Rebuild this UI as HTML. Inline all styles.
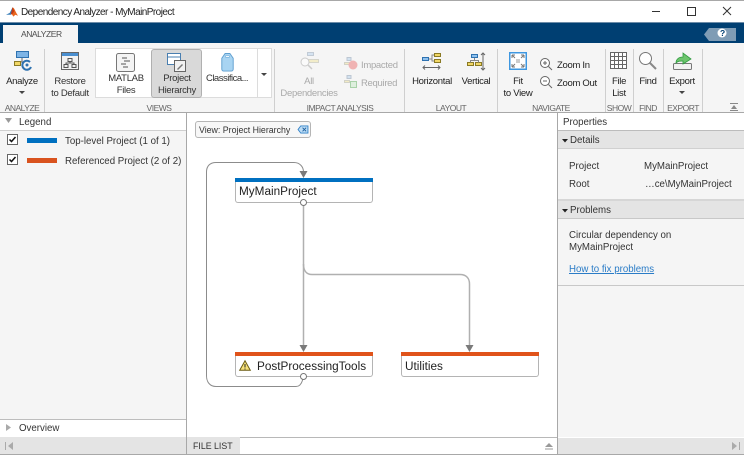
<!DOCTYPE html>
<html><head><meta charset="utf-8">
<style>
html,body{margin:0;padding:0;width:744px;height:455px;overflow:hidden;background:#fff;font-family:"Liberation Sans",sans-serif;color:#222}
.a{position:absolute}
.t{position:absolute;white-space:nowrap;font-size:9.7px;line-height:12px}
.rb .t{font-size:9.5px;letter-spacing:-.3px}
.c{text-align:center;transform:translateX(-50%)}
.rb .g{color:#666;font-size:8.5px;letter-spacing:-.5px}
.d{color:#a9a9a9}
.sep{position:absolute;top:49px;height:63px;width:1px;background:#cfcfcf}
svg{position:absolute;overflow:visible}
</style></head><body>
<div class="a" style="left:0;top:0;width:744px;height:455px;overflow:hidden">

<!-- title bar -->
<div class="a" style="left:0;top:0;width:744px;height:1px;background:#a8a8a8"></div>
<svg style="left:6px;top:6px" width="13" height="12" viewBox="0 0 14 12"><path d="M0 9l4-2 3-6 2 3-4 5z" fill="#3a7fb8"/><path d="M7 1c2 0 3 5 6 9l-3-1-2 2-2-3z" fill="#e8641e"/><path d="M7 1l2 4-2 3-2 1z" fill="#c23a12"/></svg>
<div class="t" style="left:21px;top:6px;font-size:10px;letter-spacing:-.55px;line-height:14px;color:#222">Dependency Analyzer - MyMainProject</div>
<div class="a" style="left:652px;top:11px;width:8px;height:1px;background:#333"></div>
<div class="a" style="left:687px;top:7px;width:7px;height:7px;border:1px solid #333"></div>
<svg style="left:722px;top:6px" width="10" height="10" viewBox="0 0 10 10"><path d="M1 1l8 8M9 1l-8 8" stroke="#333" stroke-width="1" fill="none"/></svg>

<!-- blue band -->
<div class="a" style="left:0;top:22px;width:744px;height:21px;background:#003f72;border-top:1px solid #6d8ca8;box-sizing:border-box"></div>
<div class="a" style="left:3px;top:25px;width:75px;height:19px;background:#f5f5f5"></div>
<div class="t" style="left:21px;top:28px;font-size:8.5px;letter-spacing:-.45px;line-height:12px;color:#4d4d4d">ANALYZER</div>
<svg style="left:704px;top:28px" width="32" height="13" viewBox="0 0 32 13"><path d="M5 0H32V13H5L0 6.500z" fill="#7f9cb5"/><circle cx="18" cy="5" r="4.500" fill="#fff"/></svg>
<div class="t" style="left:720px;top:27px;font-size:8.5px;font-weight:bold;color:#003f72">?</div>

<!-- ribbon -->
<div class="a" style="left:0;top:43px;width:744px;height:69px;background:#f5f5f5"></div>
<div class="a" style="left:0;top:112px;width:744px;height:1px;background:#a8a8a8"></div>
<div class="sep" style="left:44px"></div>
<div class="sep" style="left:274px"></div>
<div class="sep" style="left:404px"></div>
<div class="sep" style="left:497px"></div>
<div class="sep" style="left:605px"></div>
<div class="sep" style="left:633px"></div>
<div class="sep" style="left:663px"></div>
<div class="sep" style="left:702px"></div>

<div class="rb">
<!-- analyze -->
<svg style="left:14px;top:51px" width="20" height="20" viewBox="0 0 20 20"><rect x="2.500" y=".5" width="12" height="6" fill="#7db4e6" stroke="#2f72b0"/><path d="M8 7v4H5" stroke="#666" fill="none"/><rect x=".5" y="10.500" width="6" height="4" fill="#f1d766" stroke="#8a7a25"/><path d="M16 11a4.500 4.500 0 1 0 1 5" stroke="#2f72b0" stroke-width="2" fill="none"/><circle cx="13" cy="14" r="1.500" fill="#2f72b0"/></svg>
<div class="t c" style="left:22px;top:76px">Analyze</div>
<svg style="left:19px;top:91px" width="7" height="4"><path d="M0 0h6l-3 3z" fill="#444"/></svg>
<div class="t c g" style="left:22px;top:102px">ANALYZE</div>

<!-- restore -->
<svg style="left:61px;top:52px" width="18" height="18" viewBox="0 0 18 18"><rect x=".5" y=".5" width="17" height="17" fill="#f2f2f2" stroke="#666"/><rect x="1" y="1" width="16" height="3" fill="#4a8fd0"/><rect x="7" y="6.500" width="4" height="3" fill="none" stroke="#555"/><rect x="3" y="12.500" width="4" height="3" fill="none" stroke="#555"/><rect x="11" y="12.500" width="4" height="3" fill="none" stroke="#555"/><path d="M9 9.500v1.500H5v1.500M9 11h4v1.500" fill="none" stroke="#555"/></svg>
<div class="t c" style="left:70px;top:76px;color:#333">Restore</div>
<div class="t c" style="left:70px;top:88px;color:#333">to Default</div>

<!-- views gallery -->
<div class="a" style="left:95px;top:48px;width:177px;height:50px;background:#fff;border:1px solid #dcdcdc;box-sizing:border-box"></div>
<div class="a" style="left:257px;top:48px;width:1px;height:50px;background:#dcdcdc"></div>
<div class="a" style="left:151px;top:49px;width:51px;height:49px;background:#d9d9d9;border:1px solid #b0b0b0;border-radius:3px;box-sizing:border-box"></div>
<svg style="left:116px;top:53px" width="19" height="19" viewBox="0 0 19 19"><rect x=".5" y=".5" width="18" height="18" rx="2" fill="#f4f4f4" stroke="#777"/><path d="M6 5h5M8 8h6M5 11h5M7 14h5" stroke="#555" fill="none"/></svg>
<div class="t c" style="left:126px;top:73px;color:#333">MATLAB</div>
<div class="t c" style="left:126px;top:85px;color:#333">Files</div>
<svg style="left:167px;top:53px" width="20" height="19" viewBox="0 0 20 19"><rect x=".5" y=".5" width="13" height="11" fill="#fff" stroke="#4a7fb0"/><path d="M1 4h12" stroke="#4a7fb0"/><rect x="7.500" y="7.500" width="11" height="11" fill="#f2f2f2" stroke="#666"/><path d="M10 16l5-5 1 1-5 5z" fill="#777"/></svg>
<div class="t c" style="left:177px;top:73px;color:#333">Project</div>
<div class="t c" style="left:177px;top:85px;color:#333">Hierarchy</div>
<svg style="left:221px;top:53px" width="13" height="19" viewBox="0 0 13 20"><path d="M4 .5h5l3.500 5V17a2 2 0 0 1-2 2h-8a2 2 0 0 1-2-2V5.500z" fill="#a8d4f2" stroke="#5f9fd0"/><rect x="4.500" y="3" width="4" height="1.500" fill="#fff" stroke="#5f9fd0" stroke-width=".5"/></svg>
<div class="t c" style="left:227px;top:73px;color:#333;letter-spacing:-.5px">Classifica...</div>
<svg style="left:261px;top:73px" width="7" height="4"><path d="M0 0h6l-3 3z" fill="#444"/></svg>
<div class="t c g" style="left:159px;top:102px">VIEWS</div>

<!-- impact -->
<svg style="left:300px;top:52px" width="20" height="19" viewBox="0 0 20 19" opacity=".55"><rect x="7.500" y=".5" width="6" height="3" fill="#bcd6ee" stroke="#9ab"/><rect x="8.500" y="7.500" width="10" height="3" fill="#f1e6a6" stroke="#bba"/><circle cx="5" cy="10" r="4" fill="#fff" stroke="#aaa"/><path d="M8 13l4 4" stroke="#aaa" stroke-width="1.500"/></svg>
<div class="t c d" style="left:309px;top:76px">All</div>
<div class="t c d" style="left:309px;top:88px">Dependencies</div>
<svg style="left:344px;top:57px" width="14" height="13" viewBox="0 0 14 13" opacity=".6"><rect x="3" y=".5" width="4" height="3" fill="#bcd6ee" stroke="#9ab"/><rect x=".5" y="5.500" width="5" height="2" fill="#f1e6a6" stroke="#bba"/><circle cx="9" cy="8" r="4.500" fill="#e88"/></svg>
<div class="t d" style="left:361px;top:60px">Impacted</div>
<svg style="left:344px;top:75px" width="14" height="13" viewBox="0 0 14 13" opacity=".6"><rect x="3" y=".5" width="4" height="3" fill="#bcd6ee" stroke="#9ab"/><rect x=".5" y="5.500" width="5" height="2" fill="#f1e6a6" stroke="#bba"/><rect x="6.500" y="6.500" width="6" height="6" fill="#cfeccf" stroke="#7b7"/></svg>
<div class="t d" style="left:361px;top:78px">Required</div>
<div class="t c g" style="left:340px;top:102px">IMPACT ANALYSIS</div>

<!-- layout -->
<svg style="left:422px;top:52px" width="20" height="18" viewBox="0 0 20 18"><rect x=".5" y="5.500" width="6" height="3" fill="#8fc1ee" stroke="#2f72b0"/><rect x="12.500" y="1.500" width="6" height="3" fill="#f1d766" stroke="#8a7a25"/><rect x="12.500" y="7.500" width="6" height="3" fill="#f1d766" stroke="#8a7a25"/><path d="M7 7h3V3h2M10 7v2h2" stroke="#888" fill="none"/><path d="M1 15.500h17M3 13.500l-2 2 2 2M16 13.500l2 2-2 2" stroke="#666" fill="none"/></svg>
<div class="t c" style="left:432px;top:76px">Horizontal</div>
<svg style="left:467px;top:51px" width="18" height="20" viewBox="0 0 18 20"><rect x="4.500" y="3.500" width="6" height="3" fill="#8fc1ee" stroke="#2f72b0"/><rect x=".5" y="11.500" width="6" height="3" fill="#f1d766" stroke="#8a7a25"/><rect x="8.500" y="11.500" width="6" height="3" fill="#f1d766" stroke="#8a7a25"/><path d="M7.500 7v2.500H3.500v2M7.500 9.500h4v2" stroke="#888" fill="none"/><path d="M16 2v17M14 4l2-2 2 2M14 17l2 2 2-2" stroke="#666" fill="none"/></svg>
<div class="t c" style="left:476px;top:76px">Vertical</div>
<div class="t c g" style="left:451px;top:102px">LAYOUT</div>

<!-- navigate -->
<svg style="left:509px;top:52px" width="18" height="18" viewBox="0 0 18 18"><rect x=".75" y=".75" width="16.500" height="16.500" fill="#fff" stroke="#3e97e0" stroke-width="1.500"/><rect x="7" y="7" width="4" height="4" fill="#ccc"/><path d="M3 3l3 3M3 3h3M3 3v3M15 3l-3 3M15 3h-3M15 3v3M3 15l3-3M3 15h3M3 15v-3M15 15l-3-3M15 15h-3M15 15v-3" stroke="#777" fill="none"/></svg>
<div class="t c" style="left:518px;top:76px">Fit</div>
<div class="t c" style="left:518px;top:88px">to View</div>
<svg style="left:540px;top:58px" width="13" height="13" viewBox="0 0 13 13"><circle cx="5" cy="5" r="4.500" fill="#fff" stroke="#666"/><path d="M3 5h4M5 3v4M8.500 8.500l3.500 3.500" stroke="#666" fill="none"/></svg>
<div class="t" style="left:557px;top:60px">Zoom In</div>
<svg style="left:540px;top:76px" width="13" height="13" viewBox="0 0 13 13"><circle cx="5" cy="5" r="4.500" fill="#fff" stroke="#666"/><path d="M3 5h4M8.500 8.500l3.500 3.500" stroke="#666" fill="none"/></svg>
<div class="t" style="left:557px;top:78px">Zoom Out</div>
<div class="t c g" style="left:551px;top:102px">NAVIGATE</div>

<!-- show / find / export -->
<svg style="left:610px;top:52px" width="17" height="17" viewBox="0 0 17 17"><path d="M.5.500h16v16H.5zM.5 4.500h16M.5 8.500h16M.5 12.500h16M4.500.5v16M8.500.5v16M12.500.5v16" fill="#fff" stroke="#666"/></svg>
<div class="t c" style="left:619px;top:76px">File</div>
<div class="t c" style="left:619px;top:88px">List</div>
<div class="t c g" style="left:619px;top:102px">SHOW</div>
<svg style="left:639px;top:52px" width="18" height="18" viewBox="0 0 18 18"><circle cx="6.500" cy="6.500" r="6" fill="#fff" stroke="#777"/><path d="M11 11l6 6" stroke="#888" stroke-width="2"/></svg>
<div class="t c" style="left:648px;top:76px">Find</div>
<div class="t c g" style="left:648px;top:102px">FIND</div>
<svg style="left:673px;top:52px" width="20" height="18" viewBox="0 0 20 18"><rect x=".5" y="11.500" width="18" height="6" rx="1" fill="#f2f2f2" stroke="#777"/><path d="M3 11c0-4 3-6 7-6V1l8 6-8 5V9c-3 0-5 0-7 2z" fill="#6cc46c" stroke="#2f9a3f" stroke-width=".8"/></svg>
<div class="t c" style="left:682px;top:76px">Export</div>
<svg style="left:679px;top:91px" width="7" height="4"><path d="M0 0h6l-3 3z" fill="#444"/></svg>
<div class="t c g" style="left:683px;top:102px">EXPORT</div>
<svg style="left:730px;top:103px" width="9" height="8"><path d="M0 .5h8M0 7.500h8" stroke="#888"/><path d="M1 6l3-4 3 4z" fill="#888"/></svg>
</div>

<!-- left panel -->
<div class="a" style="left:0;top:113px;width:186px;height:325px;background:#f5f5f5"></div>
<div class="a" style="left:0;top:113px;width:186px;height:17px;background:#fff;border-bottom:1px solid #cfcfcf"></div>
<svg style="left:5px;top:118px" width="8" height="6"><path d="M0 0h7l-3.500 5z" fill="#999"/></svg>
<div class="t" style="left:19px;top:117px;color:#333">Legend</div>
<svg style="left:7px;top:134px" width="12" height="12" viewBox="0 0 12 12"><rect x=".5" y=".5" width="10" height="10" fill="#fff" stroke="#666"/><path d="M2.500 5.500l2 2 4-4.500" stroke="#111" stroke-width="1.500" fill="none"/></svg>
<div class="a" style="left:27px;top:138px;width:30px;height:5px;background:#0070c0"></div>
<div class="t" style="left:65px;top:136px;color:#333">Top-level Project (1 of 1)</div>
<svg style="left:7px;top:154px" width="12" height="12" viewBox="0 0 12 12"><rect x=".5" y=".5" width="10" height="10" fill="#fff" stroke="#666"/><path d="M2.500 5.500l2 2 4-4.500" stroke="#111" stroke-width="1.500" fill="none"/></svg>
<div class="a" style="left:27px;top:158px;width:30px;height:5px;background:#d9531e"></div>
<div class="t" style="left:65px;top:156px;color:#333">Referenced Project (2 of 2)</div>
<div class="a" style="left:0;top:419px;width:186px;height:19px;background:#fff;border-top:1px solid #bdbdbd;box-sizing:border-box"></div>
<svg style="left:6px;top:424px" width="6" height="8"><path d="M0 0l5 3.500-5 3.500z" fill="#aaa"/></svg>
<div class="t" style="left:19px;top:423px;color:#333">Overview</div>
<div class="a" style="left:186px;top:113px;width:1px;height:342px;background:#a8a8a8"></div>

<!-- canvas -->
<div class="a" style="left:195px;top:121px;width:116px;height:17px;background:#f7f7f7;border:1px solid #b5b5b5;border-radius:3px;box-sizing:border-box"></div>
<div class="t" style="left:199px;top:124px;font-size:8.8px;color:#333">View: Project Hierarchy</div>
<svg style="left:297px;top:125px" width="12" height="9" viewBox="0 0 13 10"><path d="M4 1h8v8H4L1 5z" fill="#bcdcf5" stroke="#2f80c8"/><path d="M6 3l4 4M10 3l-4 4" stroke="#1c5f9e" fill="none"/></svg>

<svg style="left:0;top:0" width="744" height="455" viewBox="0 0 744 455">
<g fill="none" stroke="#8c8c8c" stroke-width="1">
<path d="M303.500 374C303 381 301 386.500 296 386.500H216C210 386.500 206.500 382 206.500 376V172C206.500 166 210 162.500 216 162.500H294C300 162.500 303.500 167 303.500 172" />
</g>
<g fill="none" stroke="#b0b0b0" stroke-width="1.500">
<path d="M303.500 204V345"/>
<path d="M303.500 264C303.500 270 306 274.500 312 274.500H460C466 274.500 469.500 278 469.500 284V345"/>
</g>
<path d="M299.500 171h8l-4 7z" fill="#7a7a7a"/>
<path d="M299.500 345h8l-4 7z" fill="#7a7a7a"/>
<path d="M465.500 345h8l-4 7z" fill="#7a7a7a"/>
</svg>

<div class="a" style="left:235px;top:178px;width:138px;height:25px;background:#fff;border:1px solid #b4b4b4;border-top:0;border-radius:0 0 3px 3px;box-sizing:border-box"></div>
<div class="a" style="left:235px;top:178px;width:138px;height:4px;background:#0070c0"></div>
<div class="t" style="left:239px;top:184px;font-size:11.75px;line-height:15px;color:#222">MyMainProject</div>

<div class="a" style="left:235px;top:352px;width:138px;height:25px;background:#fff;border:1px solid #b4b4b4;border-top:0;border-radius:0 0 3px 3px;box-sizing:border-box"></div>
<div class="a" style="left:235px;top:352px;width:138px;height:4px;background:#e0531a"></div>
<svg style="left:239px;top:360px" width="12" height="11" viewBox="0 0 12 11"><path d="M6 .8L11.300 10.300H.7z" fill="#f7e27a" stroke="#6b5c10"/><path d="M6 4v3.500M6 8.500v1" stroke="#222"/></svg>
<div class="t" style="left:257px;top:359px;font-size:11.75px;line-height:15px;color:#222">PostProcessingTools</div>

<div class="a" style="left:401px;top:352px;width:138px;height:25px;background:#fff;border:1px solid #b4b4b4;border-top:0;border-radius:0 0 3px 3px;box-sizing:border-box"></div>
<div class="a" style="left:401px;top:352px;width:138px;height:4px;background:#e0531a"></div>
<div class="t" style="left:405px;top:359px;font-size:11.75px;line-height:15px;color:#222">Utilities</div>

<svg style="left:0;top:0" width="744" height="455"><circle cx="303.500" cy="202.500" r="3" fill="#fff" stroke="#777"/><circle cx="303.500" cy="376.500" r="3" fill="#fff" stroke="#777"/></svg>

<!-- right panel -->
<div class="a" style="left:557px;top:113px;width:1px;height:342px;background:#a8a8a8"></div>
<div class="a" style="left:558px;top:113px;width:186px;height:325px;background:#f5f5f5"></div>
<div class="a" style="left:558px;top:113px;width:186px;height:18px;background:#fff"></div>
<div class="t" style="left:563px;top:117px;color:#333">Properties</div>
<div class="a" style="left:558px;top:130px;width:186px;height:19px;background:#e4e4e4;border-top:1px solid #bcbcbc;border-bottom:1px solid #d0d0d0;box-sizing:border-box"></div>
<svg style="left:562px;top:139px" width="6" height="4"><path d="M0 0h6l-3 3.500z" fill="#222"/></svg>
<div class="t" style="left:570px;top:135px;color:#333">Details</div>
<div class="t" style="left:569px;top:161px;color:#333">Project</div>
<div class="t" style="left:644px;top:161px;color:#333">MyMainProject</div>
<div class="t" style="left:569px;top:179px;color:#333">Root</div>
<div class="t" style="left:645px;top:179px;color:#333">…ce\MyMainProject</div>
<div class="a" style="left:558px;top:199px;width:186px;height:20px;background:#e4e4e4;border-top:2px solid #d6d6d6;border-bottom:1px solid #c8c8c8;box-sizing:border-box"></div>
<svg style="left:562px;top:209px" width="6" height="4"><path d="M0 0h6l-3 3.500z" fill="#222"/></svg>
<div class="t" style="left:570px;top:205px;color:#333">Problems</div>
<div class="t" style="left:569px;top:230px;color:#333">Circular dependency on</div>
<div class="t" style="left:569px;top:242px;color:#333">MyMainProject</div>
<div class="t" style="left:569px;top:264px;color:#2a7cc7;text-decoration:underline">How to fix problems</div>
<div class="a" style="left:558px;top:285px;width:186px;height:1px;background:#c8c8c8"></div>

<!-- bottom bar -->
<div class="a" style="left:0;top:437px;width:186px;height:18px;background:#e4e4e4"></div>
<svg style="left:5px;top:442px" width="9" height="9"><path d="M.5 0v8" stroke="#aaa"/><path d="M8 0v8L3 4z" fill="#aaa"/></svg>
<div class="a" style="left:187px;top:437px;width:53px;height:18px;background:#e4e4e4"></div>
<div class="t" style="left:193px;top:440px;font-size:8.8px;color:#333">FILE LIST</div>
<div class="a" style="left:240px;top:437px;width:317px;height:1px;background:#b8b8b8"></div>
<svg style="left:545px;top:443px" width="9" height="7"><path d="M0 4l4-4 4 4z" fill="#999"/><path d="M0 6h8" stroke="#999"/></svg>
<div class="a" style="left:558px;top:437px;width:186px;height:18px;background:#e4e4e4;border-top:1px solid #fff;box-sizing:border-box"></div>
<svg style="left:732px;top:442px" width="9" height="9"><path d="M0 0v8l5-4z" fill="#aaa"/><path d="M7.500 0v8" stroke="#aaa"/></svg>
<div class="a" style="left:0;top:454px;width:744px;height:1px;background:#a8a8a8"></div>
</div>
</body></html>
